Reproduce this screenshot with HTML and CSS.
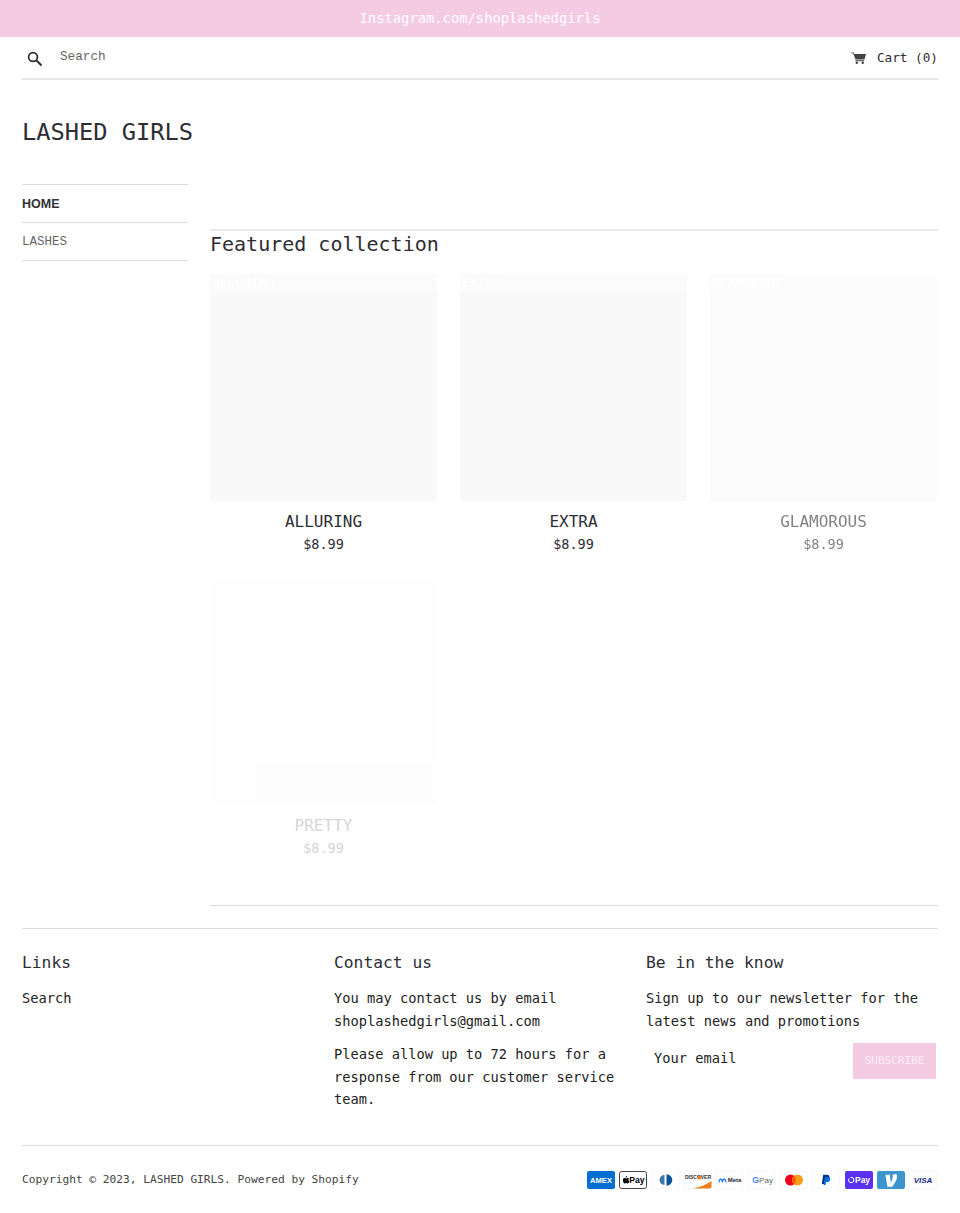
FILE: index.html
```html
<!doctype html>
<html>
<head>
<meta charset="utf-8">
<title>LASHED GIRLS</title>
<link rel="stylesheet" href="styles.css">
</head>
<body>
<div class="announce">Instagram.com/shoplashedgirls</div>
<div class="wrap">
	<div class="topbar">
		<div class="search">
			<svg class="search-ico" viewBox="0 0 16 16"><circle cx="6" cy="6" r="4.4" fill="none" stroke="#2d2d33" stroke-width="1.7"/><path d="M9.3 9.3L14.5 14.5" stroke="#2d2d33" stroke-width="2"/></svg>
			<span>Search</span>
		</div>
		<div class="cart">
			<svg class="cart-ico" viewBox="0 0 15 12"><path d="M0 .4h2.6l.7 1.6H15l-1.5 5.4H4.6L2 1.3H0z" fill="#444"/><path d="M4.2 8.2h9v1H4.6z" fill="#444"/><circle cx="5.8" cy="10.7" r="1.2" fill="#444"/><circle cx="11.8" cy="10.7" r="1.2" fill="#444"/></svg>
			<span>Cart (0)</span>
		</div>
	</div>
	<div class="layout">
		<div class="side">
			<div class="logo">LASHED GIRLS</div>
			<ul class="nav">
				<li class="on">HOME</li>
				<li>LASHES</li>
			</ul>
		</div>
		<div class="main">
			<h2 class="sec-title">Featured collection</h2>
			<div class="grid">
				<div class="item">
					<div class="pic"><span class="pic-label">ALLURING</span></div>
					<div class="name">ALLURING</div>
					<div class="price">$8.99</div>
				</div>
				<div class="item">
					<div class="pic"><span class="pic-label">EXTRA</span></div>
					<div class="name">EXTRA</div>
					<div class="price">$8.99</div>
				</div>
				<div class="item fade1">
					<div class="pic"><span class="pic-label">GLAMOROUS</span></div>
					<div class="name">GLAMOROUS</div>
					<div class="price">$8.99</div>
				</div>
				<div class="item fade2">
					<div class="pic"></div>
					<div class="name">PRETTY</div>
					<div class="price">$8.99</div>
				</div>
			</div>
		</div>
	</div>
	<div class="foot">
		<div class="foot-col">
			<h3>Links</h3>
			<p>Search</p>
		</div>
		<div class="foot-col">
			<h3>Contact us</h3>
			<p>You may contact us by email<br>shoplashedgirls@gmail.com</p>
			<p>Please allow up to 72 hours for a<br>response from our customer service<br>team.</p>
		</div>
		<div class="foot-col">
			<h3>Be in the know</h3>
			<p>Sign up to our newsletter for the<br>latest news and promotions</p>
			<div class="sub">
				<span class="sub-input">Your email</span>
				<span class="sub-btn">SUBSCRIBE</span>
			</div>
		</div>
	</div>
	<div class="bottom">
		<div class="copy">Copyright © 2023, LASHED GIRLS. Powered by Shopify</div>
		<div class="pays">
			<svg class="pay" viewBox="0 0 28 18"><rect width="28" height="18" rx="2" fill="#016fd0"/><text x="14" y="11.6" font-size="7.6" font-weight="bold" fill="#fff" text-anchor="middle" font-family="Liberation Sans">AMEX</text></svg>
			<svg class="pay" viewBox="0 0 28 18"><rect x=".5" y=".5" width="27" height="17" rx="2" fill="#fff" stroke="#444"/><path d="M7.6 6.6c-1 0-1.2.5-1.8.5s-.9-.5-1.6-.5c-1 0-1.8.9-1.8 2.3 0 1.600 1 3.200 1.900 3.200.5 0 .8-.4 1.400-.4s.8.4 1.400.4c.8 0 1.500-1.100 1.800-2.100-1.300-.6-1.300-2.500-.3-3.400zM5.900 6.200c.5-.5.8-1.100.7-1.700-.6 0-1.300.5-1.500 1.700z" fill="#000" transform="translate(1.500 .3)"/><text x="18" y="12.400" font-size="8.600" font-weight="bold" fill="#000" text-anchor="middle" font-family="Liberation Sans">Pay</text></svg>
			<svg class="pay" viewBox="0 0 28 18"><rect x=".5" y=".5" width="27" height="17" rx="2" fill="#fff" stroke="#f7f7f7"/><path d="M12.500 4a5 5 0 0 0 0 10z" fill="#3f78a8"/><path d="M14.500 3.200a5.800 5.800 0 0 1 0 11.600z" fill="#0a5296"/></svg>
			<svg class="pay" viewBox="0 0 28 18"><rect x=".5" y=".5" width="27" height="17" rx="2" fill="#fff" stroke="#f7f7f7"/><path d="M9 17.500C17 16 24 12.500 27.500 10v5.500a2 2 0 0 1-2 2z" fill="#ee7f1c"/><text x="14" y="8.400" font-size="5" font-weight="bold" fill="#333" text-anchor="middle" font-family="Liberation Sans">DISCOVER</text><circle cx="15.400" cy="6.700" r="1.900" fill="#ee7f1c"/></svg>
			<svg class="pay" viewBox="0 0 28 18"><rect x=".5" y=".5" width="27" height="17" rx="2" fill="#fff" stroke="#f7f7f7"/><path d="M3 11.500c0-3.500 2.500-5.500 3.600 0M6.500 11.500c0-3.500 2.500-5.500 3.600 0" fill="none" stroke="#0866ff" stroke-width="1.100"/><text x="18.500" y="11.400" font-size="6" font-weight="bold" fill="#1c2b33" text-anchor="middle" font-family="Liberation Sans">Meta</text></svg>
			<svg class="pay" viewBox="0 0 28 18"><rect x=".5" y=".5" width="27" height="17" rx="2" fill="#fff" stroke="#f7f7f7"/><text x="7.500" y="12.200" font-size="8.600" font-weight="bold" fill="#4285f4" text-anchor="middle" font-family="Liberation Sans">G</text><text x="18" y="12.200" font-size="8" fill="#5f6368" text-anchor="middle" font-family="Liberation Sans">Pay</text></svg>
			<svg class="pay" viewBox="0 0 28 18"><rect x=".5" y=".5" width="27" height="17" rx="2" fill="#fff" stroke="#f7f7f7"/><circle cx="10.500" cy="9" r="5.500" fill="#eb001b"/><circle cx="17.500" cy="9" r="5.500" fill="#f79e1b"/><path d="M14 4.750a5.500 5.500 0 0 1 0 8.500a5.500 5.500 0 0 1 0-8.500z" fill="#ff5f00"/></svg>
			<svg class="pay" viewBox="0 0 28 18"><rect x=".5" y=".5" width="27" height="17" rx="2" fill="#fff" stroke="#f7f7f7"/><path d="M11.200 3.800h3.600c2 0 2.900 1 2.600 2.700-.3 1.900-1.600 2.900-3.500 2.900h-1.300l-.6 3.500H9.800z" fill="#003087"/><path d="M13 6h3.200c1.600 0 2.300.9 2 2.400-.3 1.800-1.500 2.700-3.200 2.700h-1l-.5 3H11.600z" fill="#0070e0"/></svg>
			<svg class="pay" viewBox="0 0 28 18"><rect width="28" height="18" rx="2" fill="#5a31f4"/><circle cx="6.200" cy="9" r="2.700" fill="none" stroke="#fff" stroke-width="1"/><rect x="3" y="6" width="2.500" height="1.500" fill="#5a31f4"/><text x="17.500" y="12.200" font-size="8.400" font-weight="bold" fill="#fff" text-anchor="middle" font-family="Liberation Sans">Pay</text></svg>
			<svg class="pay" viewBox="0 0 28 18"><rect width="28" height="18" rx="2" fill="#3d95ce"/><path d="M18.500 3.800c.5.800.7 1.600.7 2.600 0 3.200-2.700 7.300-4.900 10.200H9.400L7.400 4.600l4.400-.4 1 8.100c1-1.600 2.100-4 2.100-5.700 0-.9-.2-1.600-.4-2.100z" fill="#fff" transform="translate(1.200 -.600) scale(.98)"/></svg>
			<svg class="pay" viewBox="0 0 28 18"><rect x=".5" y=".5" width="27" height="17" rx="2" fill="#fff" stroke="#f7f7f7"/><text x="14" y="12" font-size="8" font-weight="bold" font-style="italic" fill="#142688" text-anchor="middle" font-family="Liberation Sans">VISA</text></svg>
		</div>
	</div>
</div>
</body>
</html>
```
FILE: styles.css
```css
*{padding:0; margin:0; box-sizing:border-box;}
body{font-family:"DejaVu Sans Mono",monospace; color:#2d2d33; background:#fff;}
li{list-style:none;}
.announce{height:37px; line-height:37px; background:#f4cbe2; color:#fff; text-align:center; font-size:13.8px;}
.wrap{padding:0 22px;}
.topbar{height:43px; display:flex; justify-content:space-between; border-bottom:2px solid #e8e8e8;}
.search{display:flex; align-items:flex-start; color:#666; font-family:"Liberation Mono",monospace; font-size:12.7px;}
.search span{margin:12px 0 0 17px; line-height:15px;}
.search-ico{width:16px; height:16px; margin:14px 0 0 5px;}
.cart{display:flex; align-items:center; font-size:12.7px; height:41px;}
.cart-ico{width:15px; height:12px; margin-right:11px;}
.layout{display:flex; gap:22px;}
.side{width:166px;}
.logo{font-size:23.7px; line-height:30px; margin-top:37px; white-space:nowrap;}
.nav{margin-top:37px; border-top:1px solid #ddd;}
.nav li{height:38px; line-height:38px; border-bottom:1px solid #ddd; font-family:"Liberation Mono",monospace; font-size:12.5px; color:#666;}
.nav .on{font-family:"Liberation Sans",sans-serif; font-weight:bold; font-size:12.5px; color:#333;}
.main{flex:1; margin-top:149px; padding-bottom:46px; border-bottom:1px solid #ddd;}
.sec-title{border-top:2px solid #e8e8e8; font-size:20px; font-weight:normal; line-height:27px; margin-bottom:16px;}
.grid{display:grid; grid-template-columns:repeat(3,227px); column-gap:23px; row-gap:23px;}
.item{text-align:center;}
.fade1{opacity:.6;}
.fade2{opacity:.2;}
.pic{height:227px; background:#f9f9f9; text-align:left; overflow:hidden;}
.pic-label{display:block; height:17px; padding-left:2px; line-height:17px; font-size:13px; color:#fff; background:#fbfbfb;}
.name{font-size:16px; line-height:22px; margin-top:10px;}
.price{font-size:13.5px; line-height:22px;}
.foot{display:grid; grid-template-columns:312px 312px 1fr; margin-top:22px; padding-top:22px; border-top:1px solid #ddd; height:218px; border-bottom:1px solid #ddd;}
.foot-col{font-size:13.7px; line-height:22.6px; color:#222;}
.foot-col h3{font-size:16.3px; font-weight:normal; line-height:24px; margin-bottom:12px; color:#2d2d33;}
.foot-col p{margin-bottom:11px;}
.sub{display:flex; justify-content:space-between; align-items:flex-start; width:290px;}
.sub-input{padding:4px 0 0 8px;}
.sub-btn{width:83px; height:36px; line-height:36px; background:#f4cbe2; color:#fbeef6; font-size:11px; text-align:center;}
.bottom{display:flex; justify-content:space-between; align-items:center; height:68px;}
.copy{font-size:11.2px; color:#444; padding-bottom:1px;}
.pays{display:flex; gap:4.2px; margin-right:1px;}
.pay{width:28px; height:18px; display:block;}
```
